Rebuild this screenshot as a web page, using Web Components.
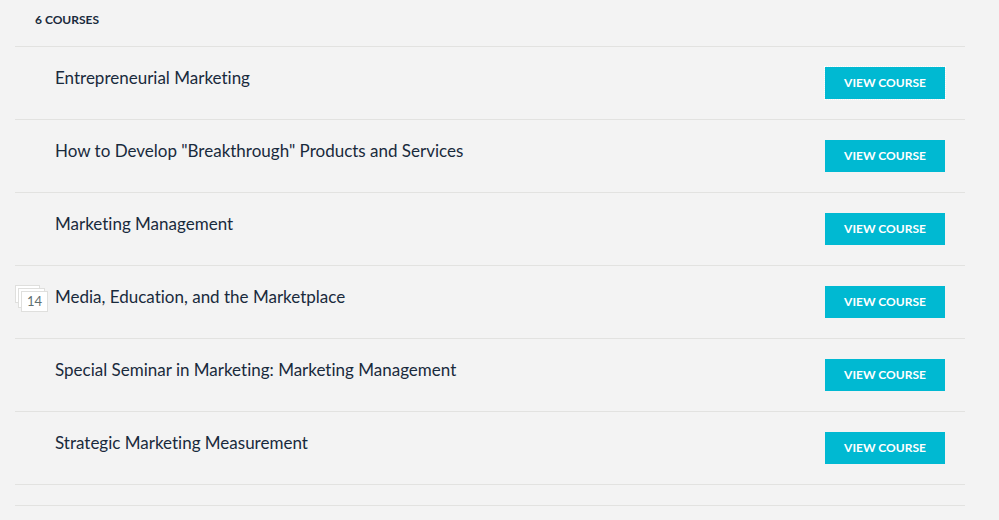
<!DOCTYPE html>
<html lang="en">
<head>
<meta charset="utf-8">
<title>Courses</title>
<style>
body { margin: 0; background: #f3f3f3; color: #192a3c; font-family: Lato, "Liberation Sans", sans-serif; font-variant-ligatures: none; --line: #e2e2e0; }
</style>
</head>
<body>
<course-list>
  <course-row current>Entrepreneurial Marketing</course-row>
  <course-row>How to Develop "Breakthrough" Products and Services</course-row>
  <course-row>Marketing Management</course-row>
  <course-row count="14">Media, Education, and the Marketplace</course-row>
  <course-row>Special Seminar in Marketing: Marketing Management</course-row>
  <course-row>Strategic Marketing Measurement</course-row>
</course-list>
<script>
class CountStack extends HTMLElement {
  constructor() {
    super();
    this.attachShadow({ mode: 'open' }).innerHTML = `
      <style>
        :host { display: grid; width: 33px; height: 27px; }
        i, span { grid-area: 1 / 1; box-sizing: border-box; background: #fff; border: 1px solid #dfdfdd; }
        .back { width: 25px; height: 18px; }
        .middle { width: 27px; height: 20px; margin: 3px 0 0 3px; }
        span { width: 27px; height: 21px; margin: 6px 0 0 6px; font-size: 13px; line-height: 19px; text-align: center; color: #5f6f70; }
      </style>
      <i class="back"></i><i class="middle"></i><span><slot></slot></span>`;
  }
}
customElements.define('count-stack', CountStack);

class CourseRow extends HTMLElement {
  constructor() {
    super();
    this.attachShadow({ mode: 'open' }).innerHTML = `
      <style>
        :host { display: grid; grid-template-columns: 40px 1fr auto; align-items: start; padding: 19px 20px 20px 0; border-bottom: 1px solid var(--line); }
        h2 { margin: 1px 0 0; font-size: 17px; line-height: 22px; font-weight: 400; }
        button { width: 120px; height: 32px; margin: 1px 0 0; padding: 0; border: 0; border-radius: 0; background: #00b9d2; color: #fff; font: 700 12px/32px Lato, "Liberation Sans", sans-serif; text-transform: uppercase; cursor: pointer; }
        :host([current]) button { outline: 1px dotted #fff; }
      </style>
      <div class="badge"></div><h2><slot></slot></h2><button type="button">View course</button>`;
  }
  connectedCallback() {
    const count = this.getAttribute('count');
    if (!count) return;
    const badge = document.createElement('count-stack');
    badge.textContent = count;
    this.shadowRoot.querySelector('.badge').replaceChildren(badge);
  }
}
customElements.define('course-row', CourseRow);

class CourseList extends HTMLElement {
  constructor() {
    super();
    this.attachShadow({ mode: 'open' }).innerHTML = `
      <style>
        :host { display: block; margin: 0 34px 0 15px; }
        header { padding: 10px 20px 16px; border-bottom: 1px solid var(--line); }
        h1 { margin: 0; font-size: 12px; line-height: 20px; font-weight: 700; text-transform: uppercase; }
        footer { height: 20px; border-bottom: 1px solid var(--line); }
      </style>
      <header><h1>6 courses</h1></header>
      <slot></slot>
      <footer></footer>`;
  }
}
customElements.define('course-list', CourseList);
</script>
</body>
</html>
